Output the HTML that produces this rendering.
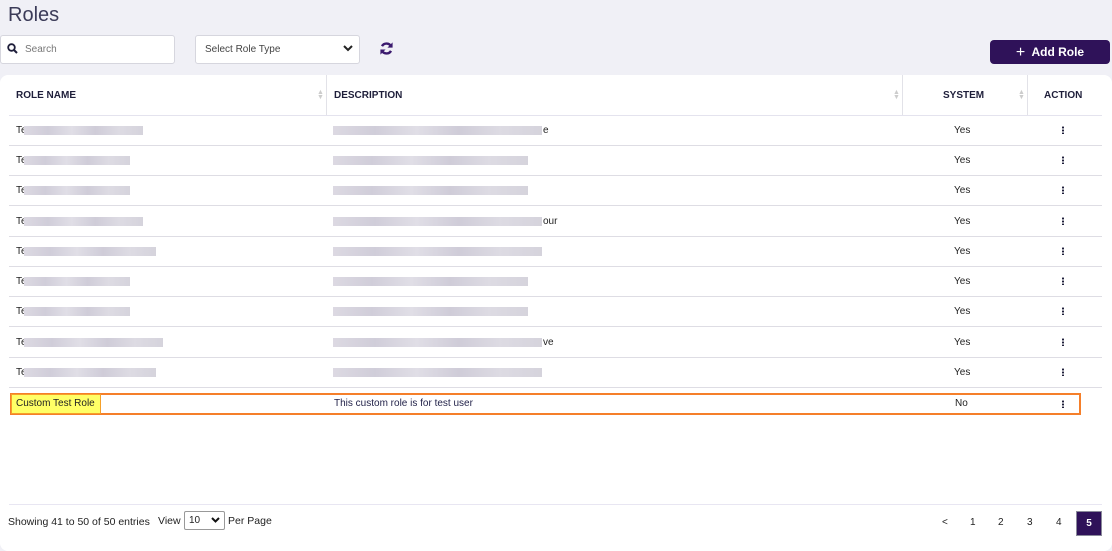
<!DOCTYPE html>
<html><head><style>
*{box-sizing:border-box;margin:0;padding:0}
body{width:1112px;height:551px;background:#f0f0f6;font-family:"Liberation Sans",sans-serif;position:relative;overflow:hidden;color:#222}
.a{position:absolute}
.h{font-size:10px;font-weight:bold;color:#1e1e3a}
.t{font-size:10px;color:#222}
.line{position:absolute;height:1px;background:#dedde4}
.bar{position:absolute;height:9px;background:linear-gradient(90deg,#dcd9e2,#d0cdd9 20%,#e0dee6 40%,#cfccd8 60%,#dddbe3 80%,#d5d3dc)}
.dots{position:absolute;width:2px;height:8px;background:radial-gradient(circle,#1e1e3a 1px,transparent 1.2px) 0 0/2px 3px}
.sort{position:absolute;font-size:7px;color:#ccc;line-height:5px}
</style></head><body>
<div class="a" style="left:8px;top:4px;font-size:20px;color:#3b3b58">Roles</div>
<div class="a" style="left:0;top:35px;width:175px;height:29px;background:#fff;border:1px solid #d6d6de;border-radius:3px"></div>
<svg class="a" style="left:7px;top:43px" width="11" height="11" viewBox="0 0 11 11"><circle cx="4.5" cy="4.5" r="3.3" fill="none" stroke="#1e1e3a" stroke-width="1.8"/><path d="M7 7l3 3" stroke="#1e1e3a" stroke-width="2"/></svg>
<div class="a" style="left:25px;top:44px;font-size:10px;color:#777">Search</div>
<div class="a" style="left:195px;top:35px;width:165px;height:29px;background:#fff;border:1px solid #d6d6de;border-radius:3px"></div>
<div class="a" style="left:205px;top:44px;font-size:10px;color:#444">Select Role Type</div>
<svg class="a" style="left:343px;top:45px" width="10" height="7"><path d="M1 1l4 4 4-4" fill="none" stroke="#222" stroke-width="2"/></svg>
<svg class="a" style="left:379px;top:41px" width="15" height="15" viewBox="0 0 16 16"><path d="M13 6A5.5 5.5 0 0 0 3.2 5.5" fill="none" stroke="#3b1a6e" stroke-width="2.6"/><path d="M14.5 1.5V7H9z" fill="#3b1a6e"/><path d="M3 10a5.5 5.5 0 0 0 9.8.5" fill="none" stroke="#3b1a6e" stroke-width="2.6"/><path d="M1.5 14.5V9H7z" fill="#3b1a6e"/></svg>
<div class="a" style="left:990px;top:40px;width:120px;height:24px;background:#2f1259;border-radius:4px;color:#fff;font-size:12px;font-weight:bold;line-height:24px;text-align:center"><span style="font-weight:normal;font-size:16px;vertical-align:-1px">+</span>&nbsp; Add Role</div>

<div class="a" style="left:0;top:75px;width:1112px;height:476px;background:#fff;border-radius:8px"></div>
<div class="a" style="left:326px;top:75px;width:1px;height:40px;background:#e2e2e8"></div>
<div class="a" style="left:902px;top:75px;width:1px;height:40px;background:#e2e2e8"></div>
<div class="a" style="left:1027px;top:75px;width:1px;height:40px;background:#e2e2e8"></div>
<div class="a h" style="left:16px;top:90px">ROLE NAME</div>
<div class="a h" style="left:334px;top:90px">DESCRIPTION</div>
<div class="a h" style="left:943px;top:90px">SYSTEM</div>
<div class="a h" style="left:1044px;top:90px">ACTION</div>
<div class="sort" style="left:317px;top:90px">▲<br>▼</div>
<div class="sort" style="left:893px;top:90px">▲<br>▼</div>
<div class="sort" style="left:1018px;top:90px">▲<br>▼</div>
<div class="line" style="left:9px;top:115px;width:1093px;background:#e4e3ee"></div>

<div id="rows"></div>
<script>
var c=[130,160,190,221,251,281,311,342,372],nw=[143,130,130,143,156,130,130,163,156],dw=[542,528,528,542,542,528,528,542,542],tail=['e','','','our','','','','ve',''];
var h='';
for(var i=0;i<9;i++){var y=c[i];
h+='<div class="a t" style="left:16px;top:'+(y-5)+'px">Te</div>';
h+='<div class="bar" style="left:24px;top:'+(y-4)+'px;width:'+(nw[i]-24)+'px"></div>';
h+='<div class="bar" style="left:333px;top:'+(y-4)+'px;width:'+(dw[i]-333)+'px"></div>';
if(tail[i])h+='<div class="a t" style="left:'+(dw[i]+1)+'px;top:'+(y-5)+'px">'+tail[i]+'</div>';
h+='<div class="a t" style="left:954px;top:'+(y-5)+'px">Yes</div>';
h+='<div class="dots" style="left:1062px;top:'+(y-4)+'px"></div>';
h+='<div class="line" style="left:9px;top:'+(y+15)+'px;width:1093px"></div>';}
document.getElementById('rows').innerHTML=h;
</script>
<div class="a" style="left:10px;top:393px;width:1071px;height:22px;border:2px solid #f57f2a"></div>
<div class="a" style="left:11px;top:394px;width:90px;height:20px;background:#ffff66;border:1px solid #f5a02a"></div>
<div class="a t" style="left:16px;top:398px">Custom Test Role</div>
<div class="a t" style="left:334px;top:398px;color:#23234a">This custom role is for test user</div>
<div class="a t" style="left:955px;top:398px">No</div>
<div class="dots" style="left:1062px;top:400px"></div>

<div class="line" style="left:9px;top:504px;width:1093px;background:#e8e6f2"></div>
<div class="a t" style="left:8px;top:516px;font-size:10.5px">Showing 41 to 50 of 50 entries</div>
<div class="a t" style="left:158px;top:515px;font-size:10.5px">View</div>
<div class="a" style="left:184px;top:511px;width:41px;height:19px;border:1px solid #999;border-radius:2px;background:#fff"></div>
<div class="a t" style="left:189px;top:515px">10</div>
<svg class="a" style="left:211px;top:517px" width="9" height="6"><path d="M1 1l3.5 3.5L8 1" fill="none" stroke="#111" stroke-width="2"/></svg>
<div class="a t" style="left:228px;top:515px;font-size:10.5px">Per Page</div>
<div class="a t" style="left:942px;top:517px">&lt;</div>
<div class="a t" style="left:970px;top:517px">1</div>
<div class="a t" style="left:998px;top:517px">2</div>
<div class="a t" style="left:1027px;top:517px">3</div>
<div class="a t" style="left:1056px;top:517px">4</div>
<div class="a" style="left:1076px;top:511px;width:26px;height:25px;background:#2f1259;border:1px solid #8a8a9a;color:#fff;font-size:10px;font-weight:bold;text-align:center;line-height:23px">5</div>
</body></html>
